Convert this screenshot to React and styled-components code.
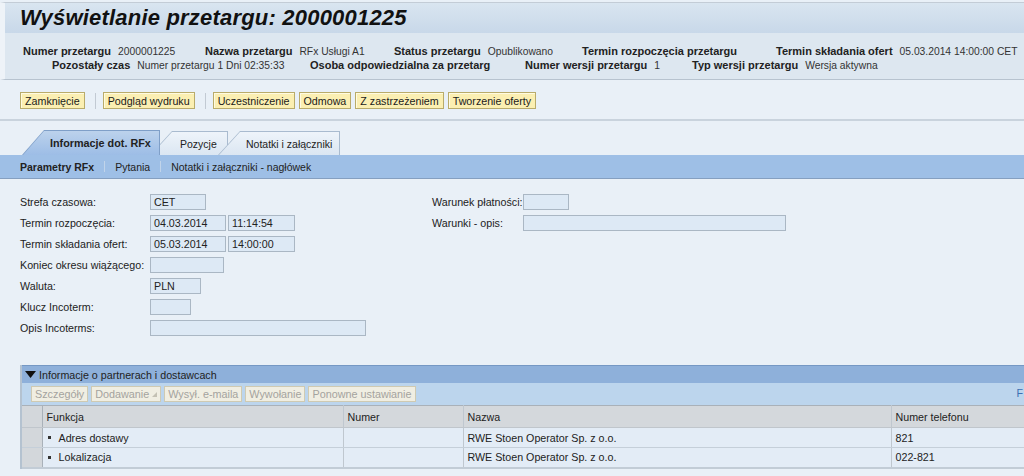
import styled, { createGlobalStyle } from "styled-components";

const GlobalStyle = createGlobalStyle`
    body {
        margin: 0;
        background: #e9f0f7;
        font-family: "Liberation Sans", Arial, sans-serif;
        font-size: 11px;
        color: #1a1a1a;
        overflow: hidden;
    }
`

const Page = styled.div`
    width: 1024px;
    height: 476px;
    overflow: hidden;
    background: #e9f0f7;
`

const TitleBar = styled.div`
    margin-top: 2px;
    height: 30px;
    border-top: 1px solid #c3ccd6;
    border-left: 5px solid #eef3f8;
    background: linear-gradient(#d9e5f0, #c8d8e9);
    display: flex;
    align-items: center;
    padding-left: 15px;
    h1 {
        margin: 0;
        font-size: 22px;
        font-style: italic;
        font-weight: bold;
        color: #111;
        letter-spacing: 0.2px;
    }
`

const InfoBand = styled.div`
    height: 47px;
    box-sizing: border-box;
    border-left: 5px solid #eef3f8;
    border-bottom: 1px solid #b7c3cf;
    background: #dde7f0;
    display: flex;
    flex-direction: column;
    justify-content: center;
    gap: 1px;
    padding-top: 4px;
`

const InfoRow = styled.div`
    display: flex;
    padding-left: ${p => p.$indent}px;
    line-height: 13px;
    white-space: nowrap;
`

const InfoItem = styled.div`
    width: ${p => p.$w ? `${p.$w}px` : "auto"};
    flex-shrink: 0;
    b {
        font-weight: bold;
        font-size: 11px;
        color: #222;
    }
    span {
        margin-left: 7px;
        font-size: 10.3px;
        color: #333;
    }
`

const Toolbar = styled.div`
    display: flex;
    align-items: center;
    gap: 4px;
    padding: 12px 0 10px 20px;
    height: 41px;
    box-sizing: border-box;
    border-bottom: 2px solid #c9d3dd;
`

const YellowButton = styled.button`
    height: 17px;
    padding: 0 4px;
    font-family: inherit;
    font-size: 10.7px;
    color: #1a1a1a;
    background: #fbefb2;
    border: 1px solid #b9ab6a;
    box-shadow: inset 1px 1px 0 #fffbe0;
    cursor: pointer;
`

const ToolSep = styled.div`
    width: 1px;
    height: 16px;
    background: #c2cad3;
    margin: 0 3px 0 6px;
`

const TabStrip = styled.div`
    display: flex;
    align-items: flex-end;
    height: 34px;
    padding-left: 22px;
`

const TabOuter = styled.div`
    height: ${p => p.$active ? 25 : 24}px;
    width: ${p => p.$w}px;
    margin-left: ${p => p.$overlap ? -10 : 0}px;
    position: relative;
    z-index: ${p => p.$active ? 2 : 1};
    background: ${p => p.$active ? "#7f9fc8" : "#a9bbcf"};
    clip-path: polygon(0 100%, 22px 0, 100% 0, 100% 100%);
`

const TabInner = styled.div`
    position: absolute;
    inset: 1px 1px 0 1px;
    clip-path: polygon(0 100%, 21px 0, 100% 0, 100% 100%);
    background: ${p => p.$active
        ? "linear-gradient(#bcd2ec, #9dbde6)"
        : "linear-gradient(#eef4fa, #dbe6f2)"};
    display: flex;
    align-items: center;
    padding-left: ${p => p.$pad}px;
    font-size: ${p => p.$active ? 10.8 : 10.5}px;
    font-weight: ${p => p.$active ? "bold" : "normal"};
    color: #222;
    white-space: nowrap;
`

const SubTabBar = styled.div`
    height: 23px;
    background: #9ebfe6;
    border-bottom: 1px solid #859fc0;
    display: flex;
    align-items: center;
    padding-left: 20px;
    font-size: 10.5px;
    color: #222;
`

const SubTab = styled.span`
    font-weight: ${p => p.$active ? "bold" : "normal"};
`

const SubSep = styled.span`
    width: 1px;
    height: 11px;
    background: #c1d4ea;
    margin: 0 10px;
`

const Form = styled.div`
    display: flex;
    padding: 15px 0 0 20px;
    height: 186px;
    box-sizing: border-box;
`

const FormColumn = styled.div`
    display: flex;
    flex-direction: column;
    gap: 5px;
    width: ${p => p.$w}px;
`

const FormRow = styled.div`
    display: flex;
    align-items: center;
    height: 16px;
`

const Label = styled.label`
    width: ${p => p.$w}px;
    flex-shrink: 0;
    font-size: 10.7px;
    color: #222;
    white-space: nowrap;
`

const Input = styled.div`
    width: ${p => p.$w}px;
    height: 14px;
    margin-right: 2px;
    background: #dde9f5;
    border: 1px solid #aab7c4;
    font-size: 10.7px;
    line-height: 14px;
    padding-left: 3px;
    box-sizing: content-box;
    color: #222;
`

const Panel = styled.div`
    margin-left: 20px;
    border-left: 2px solid #b4c2d0;
`

const PanelHead = styled.div`
    height: 17px;
    background: #8eb0da;
    border-top: 1px solid #7598c4;
    display: flex;
    align-items: center;
    gap: 3px;
    padding-left: 3px;
    font-size: 10.7px;
    color: #222;
`

const PanelTools = styled.div`
    height: 22px;
    background: #bcd5ed;
    display: flex;
    align-items: center;
    gap: 3px;
    padding-left: 9px;
    position: relative;
`

const GreyButton = styled.button`
    height: 16px;
    padding: 0 3px;
    font-family: inherit;
    font-size: 10.8px;
    color: #a4a39e;
    background: #f0eee2;
    border: 1px solid #cfcab2;
    display: flex;
    align-items: center;
    gap: 3px;
`

const MoreLink = styled.span`
    position: absolute;
    right: 1px;
    top: 4px;
    color: #3d6fb3;
    font-size: 10.7px;
`

const Table = styled.table`
    border-collapse: collapse;
    table-layout: fixed;
    width: 1021px;
    font-size: 10.7px;
    color: #222;
    th, td {
        box-sizing: border-box;
        text-align: left;
        font-weight: normal;
        padding: 0 0 0 4px;
        white-space: nowrap;
        overflow: hidden;
        border-right: 1px solid #bfc7cf;
    }
    th {
        height: 22px;
        background: #d4d8dc;
        border-top: 1px solid #a9b1b9;
        border-bottom: 1px solid #c0c6cc;
    }
    td {
        height: 20px;
        background: #e3ecf6;
        border-bottom: 1px solid #c5cfd9;
    }
    td.sel, th.sel {
        padding: 0;
        background: #d3d7db;
        border-right: 1px solid #a9b1b9;
    }
    tr:last-child td {
        border-bottom: 2px solid #c2ccd6;
    }
`

const Bullet = styled.span`
    display: inline-block;
    width: 3px;
    height: 3px;
    background: #333;
    margin: 0 8px 2px 1px;
    vertical-align: middle;
`

const TriangleDown = () => (
    <svg width="11" height="8" viewBox="0 0 11 8">
        <path d="M0 0 H11 L5.5 7 Z" fill="#111" />
    </svg>
)

const columns = [
    { key: "sel", width: 20 },
    { key: "fn", width: 301, title: "Funkcja" },
    { key: "num", width: 120, title: "Numer" },
    { key: "name", width: 428, title: "Nazwa" },
    { key: "tel", width: 152, title: "Numer telefonu" },
]

const rows = [
    { fn: "Adres dostawy", num: "", name: "RWE Stoen Operator Sp. z o.o.", tel: "821" },
    { fn: "Lokalizacja", num: "", name: "RWE Stoen Operator Sp. z o.o.", tel: "022-821" },
]

function App() {
    return (
        <Page>
            <GlobalStyle />
            <TitleBar>
                <h1>Wyświetlanie przetargu: 2000001225</h1>
            </TitleBar>
            <InfoBand>
                <InfoRow $indent={18}>
                    <InfoItem $w={182}><b>Numer przetargu</b><span>2000001225</span></InfoItem>
                    <InfoItem $w={189}><b>Nazwa przetargu</b><span>RFx Usługi A1</span></InfoItem>
                    <InfoItem $w={188}><b>Status przetargu</b><span>Opublikowano</span></InfoItem>
                    <InfoItem $w={194}><b>Termin rozpoczęcia przetargu</b></InfoItem>
                    <InfoItem><b>Termin składania ofert</b><span>05.03.2014 14:00:00 CET</span></InfoItem>
                </InfoRow>
                <InfoRow $indent={47}>
                    <InfoItem $w={258}><b>Pozostały czas</b><span>Numer przetargu 1 Dni 02:35:33</span></InfoItem>
                    <InfoItem $w={215}><b>Osoba odpowiedzialna za przetarg</b></InfoItem>
                    <InfoItem $w={167}><b>Numer wersji przetargu</b><span>1</span></InfoItem>
                    <InfoItem><b>Typ wersji przetargu</b><span>Wersja aktywna</span></InfoItem>
                </InfoRow>
            </InfoBand>
            <Toolbar>
                <YellowButton>Zamknięcie</YellowButton>
                <ToolSep />
                <YellowButton>Podgląd wydruku</YellowButton>
                <ToolSep />
                <YellowButton>Uczestniczenie</YellowButton>
                <YellowButton>Odmowa</YellowButton>
                <YellowButton>Z zastrzeżeniem</YellowButton>
                <YellowButton>Tworzenie oferty</YellowButton>
            </Toolbar>
            <TabStrip>
                <TabOuter $active $w={138}><TabInner $active $pad={27}>Informacje dot. RFx</TabInner></TabOuter>
                <TabOuter $overlap $w={78}><TabInner $pad={29}>Pozycje</TabInner></TabOuter>
                <TabOuter $overlap $w={122}><TabInner $pad={27}>Notatki i załączniki</TabInner></TabOuter>
            </TabStrip>
            <SubTabBar>
                <SubTab $active>Parametry RFx</SubTab>
                <SubSep />
                <SubTab>Pytania</SubTab>
                <SubSep />
                <SubTab>Notatki i załączniki - nagłówek</SubTab>
            </SubTabBar>
            <Form>
                <FormColumn $w={412}>
                    <FormRow><Label $w={130}>Strefa czasowa:</Label><Input $w={51}>CET</Input></FormRow>
                    <FormRow><Label $w={130}>Termin rozpoczęcia:</Label><Input $w={71}>04.03.2014</Input><Input $w={62}>11:14:54</Input></FormRow>
                    <FormRow><Label $w={130}>Termin składania ofert:</Label><Input $w={71}>05.03.2014</Input><Input $w={62}>14:00:00</Input></FormRow>
                    <FormRow><Label $w={130}>Koniec okresu wiążącego:</Label><Input $w={69} /></FormRow>
                    <FormRow><Label $w={130}>Waluta:</Label><Input $w={46}>PLN</Input></FormRow>
                    <FormRow><Label $w={130}>Klucz Incoterm:</Label><Input $w={36} /></FormRow>
                    <FormRow><Label $w={130}>Opis Incoterms:</Label><Input $w={211} /></FormRow>
                </FormColumn>
                <FormColumn $w={380}>
                    <FormRow><Label $w={91}>Warunek płatności:</Label><Input $w={41} /></FormRow>
                    <FormRow><Label $w={91}>Warunki - opis:</Label><Input $w={258} /></FormRow>
                </FormColumn>
            </Form>
            <Panel>
                <PanelHead><TriangleDown />Informacje o partnerach i dostawcach</PanelHead>
                <PanelTools>
                    <GreyButton>Szczegóły</GreyButton>
                    <GreyButton>Dodawanie
                        <svg width="5" height="5" viewBox="0 0 5 5"><path d="M5 0 V5 H0 Z" fill="#c4c1b4" /></svg>
                    </GreyButton>
                    <GreyButton>Wysył. e-maila</GreyButton>
                    <GreyButton>Wywołanie</GreyButton>
                    <GreyButton>Ponowne ustawianie</GreyButton>
                    <MoreLink>F</MoreLink>
                </PanelTools>
                <Table>
                    <colgroup>
                        {columns.map(c => <col key={c.key} style={{ width: c.width }} />)}
                    </colgroup>
                    <thead>
                        <tr>
                            {columns.map(c => (
                                <th key={c.key} className={c.key === "sel" ? "sel" : undefined}>{c.title}</th>
                            ))}
                        </tr>
                    </thead>
                    <tbody>
                        {rows.map(r => (
                            <tr key={r.fn}>
                                <td className="sel"></td>
                                <td><Bullet />{r.fn}</td>
                                <td>{r.num}</td>
                                <td>{r.name}</td>
                                <td>{r.tel}</td>
                            </tr>
                        ))}
                    </tbody>
                </Table>
            </Panel>
        </Page>
    )
}

export default App;
